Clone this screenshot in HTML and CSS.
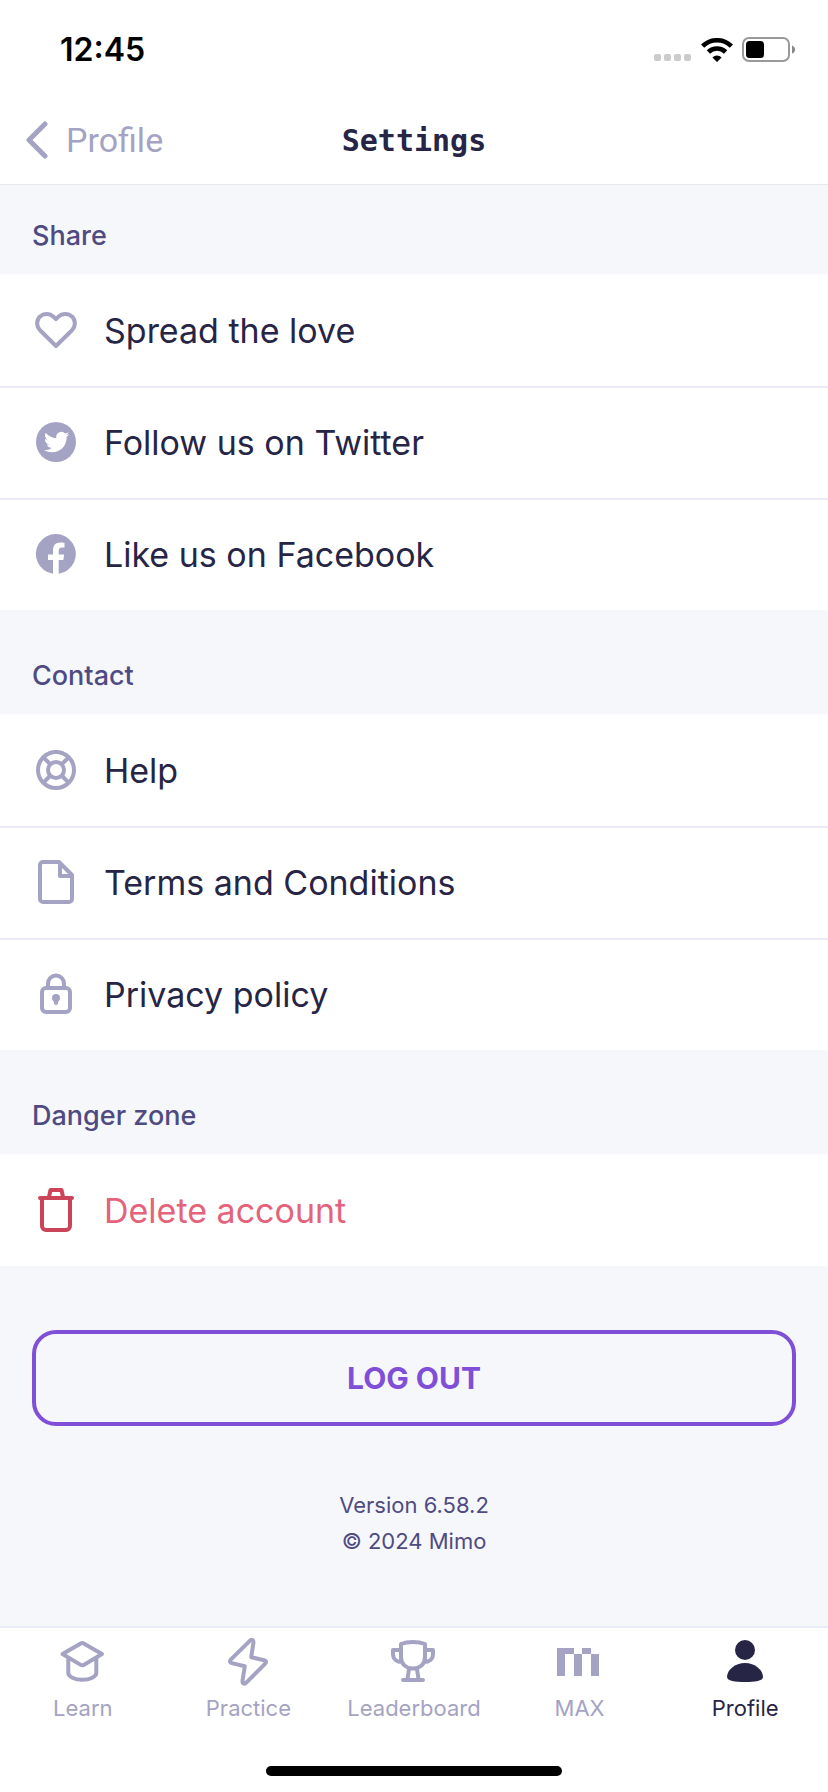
FILE: index.html
```html
<!DOCTYPE html>
<html lang="en">
<head>
<meta charset="utf-8">
<meta name="viewport" content="width=device-width, initial-scale=1">
<title>Settings</title>
<link rel="stylesheet" href="styles.css">
</head>
<body>
<div class="screen">
  <div class="status-bar">
    <time class="clock">12:45</time>
    <div class="status-icons">
      <svg class="signal" width="38" height="9" viewBox="0 0 38 9" aria-hidden="true"><g fill="#cbcbcb"><rect width="7" height="7" rx="2"/><rect x="10" width="7" height="7" rx="2"/><rect x="20" width="7" height="7" rx="2"/><rect x="30" width="7" height="7" rx="2"/></g></svg>
      <svg width="32" height="24" viewBox="0 0 32 24" aria-hidden="true"><g fill="none" stroke="#000" stroke-width="4.6"><path d="M1.6 8.2a20.4 20.4 0 0 1 28.8 0"/><path d="M7.4 14a12.2 12.2 0 0 1 17.2 0"/></g><path d="M16 24l-4.6-4.6a6.6 6.6 0 0 1 9.2 0z"/></svg>
      <svg width="54" height="26" viewBox="0 0 54 26" aria-hidden="true"><rect x="1" y="1" width="46" height="23" rx="6" fill="none" stroke="#999" stroke-width="2"/><rect x="4" y="4" width="18" height="17" rx="3.5"/><path d="M50 8.500q3 1 3 4t-3 4z" fill="#888"/></svg>
    </div>
  </div>
  <header class="nav-bar">
    <a class="back" href="#profile">
      <svg width="24" height="40" viewBox="0 0 24 40" aria-hidden="true"><path d="M21 4L5 20l16 16" fill="none" stroke="#a5a3c3" stroke-width="5" stroke-linecap="round" stroke-linejoin="round"/></svg>
      <span>Profile</span>
    </a>
    <h1 class="title">Settings</h1>
  </header>
  <main class="content">
    <section>
      <h2 class="section-title section-title-first">Share</h2>
      <ul class="list">
        <li><a class="row" href="#love"><svg class="icon" viewBox="0 0 48 48" aria-hidden="true"><path d="M24 40L7.800 24a9.700 9.700 0 0 1 0-13.300c3.800-3.700 9.900-3.700 13.700 0L24 13.200l2.500-2.500c3.800-3.700 9.900-3.700 13.700 0a9.700 9.700 0 0 1 0 13.300z"/></svg><span>Spread the love</span></a></li>
        <li><a class="row" href="#twitter"><svg class="icon" viewBox="0 0 48 48" aria-hidden="true"><circle class="solid" cx="24" cy="24" r="20"/><path class="cut" transform="translate(12 11.500) scale(1.050)" d="M23.950 4.570a10 10 0 0 1-2.820.770 4.960 4.960 0 0 0 2.160-2.720c-.95.550-2 .950-3.130 1.180a4.920 4.920 0 0 0-8.380 4.480C7.690 8.090 4.070 6.130 1.640 3.160a4.920 4.920 0 0 0 1.520 6.570 4.900 4.900 0 0 1-2.230-.610v.060a4.920 4.920 0 0 0 3.950 4.830 5 5 0 0 1-2.210.080 4.940 4.940 0 0 0 4.600 3.420A9.870 9.870 0 0 1 0 19.540a14 14 0 0 0 7.550 2.210c9.050 0 14-7.500 14-13.980 0-.210 0-.420-.020-.630a9.900 9.900 0 0 0 2.420-2.570z"/></svg><span>Follow us on Twitter</span></a></li>
        <li><a class="row" href="#facebook"><svg class="icon" viewBox="0 0 48 48" aria-hidden="true"><path class="solid" d="M21 43.800V30h-5v-5.500h5v-4.300c0-5 2.800-7.700 7.300-7.700 1.400 0 2.700.1 4.200.4v4.700h-2.400c-2.600 0-3.400 1.400-3.400 3.200v3.700h5.500L31.300 30h-4.600v13.800A20 20 0 1 0 21 43.800z"/></svg><span>Like us on Facebook</span></a></li>
      </ul>
    </section>
    <section>
      <h2 class="section-title">Contact</h2>
      <ul class="list">
        <li><a class="row" href="#help"><svg class="icon" viewBox="0 0 48 48" aria-hidden="true"><circle cx="24" cy="24" r="18"/><circle cx="24" cy="24" r="8"/><path d="M11.500 11.500l6.500 6.500M36.500 11.500L30 18M11.500 36.500L18 30M36.500 36.500L30 30"/></svg><span>Help</span></a></li>
        <li><a class="row" href="#terms"><svg class="icon" viewBox="0 0 48 48" aria-hidden="true"><path d="M27 4H11a3 3 0 0 0-3 3v34a3 3 0 0 0 3 3h26a3 3 0 0 0 3-3V17zM28 4v14h12"/></svg><span>Terms and Conditions</span></a></li>
        <li><a class="row" href="#privacy"><svg class="icon" viewBox="0 0 48 48" aria-hidden="true"><rect x="10" y="18" width="28" height="24" rx="4"/><path d="M16 18v-4.500a8 8 0 0 1 16 0V18"/><circle class="solid" cx="24" cy="28" r="4"/><path d="M24 29v4" stroke-linecap="round"/></svg><span>Privacy policy</span></a></li>
      </ul>
    </section>
    <section>
      <h2 class="section-title">Danger zone</h2>
      <ul class="list">
        <li><button type="button" class="row danger"><svg class="icon" viewBox="0 0 48 48" aria-hidden="true"><path d="M10 12v28a4 4 0 0 0 4 4h20a4 4 0 0 0 4-4V12M8 12h32M17 11l1.500-7h11l1.500 7" stroke-linecap="round"/></svg><span>Delete account</span></button></li>
      </ul>
    </section>
    <button type="button" class="logout">LOG OUT</button>
    <p class="version">Version 6.58.2<br>© 2024 Mimo</p>
  </main>
  <nav class="tabs" aria-label="Main">
    <a class="tab" href="#learn"><svg class="icon" viewBox="0 0 48 48" aria-hidden="true"><path d="M21.700 5.400L3.500 16l18.200 10.900a3 3 0 0 0 3 0L43 16 24.700 5.400a3 3 0 0 0-3 0zM9.300 20v15c0 3.500 6 6.800 14 6.800s14-3.300 14-6.800V20"/></svg><span>Learn</span></a>
    <a class="tab" href="#practice"><svg class="icon" viewBox="0 0 48 48" aria-hidden="true"><path d="M25.800 2.800L7 21.400c-1.800 1.800-1.200 3.200.8 3.700l13 3.200-2.300 14.500c-.4 2.800 1.600 3.800 3.500 2L41 25.800c1.800-1.800 1-3.200-.8-3.600l-13-3 2.200-14.500c.3-2.600-1.700-3.800-3.600-1.900z"/></svg><span>Practice</span></a>
    <a class="tab" href="#leaderboard"><svg class="icon" viewBox="0 0 48 48" aria-hidden="true"><path d="M11 6C17.500 3.400 28.500 3.400 35 6v13c0 7-5 11.500-12 11.500S11 26 11 19zM11 12H3v4c0 5 4 8 9 8M35 12h8v4c0 5-4 8-9 8M19 31l-1.500 10M27 31l1.500 10M13 42h20" stroke-linecap="round"/></svg><span>Leaderboard</span></a>
    <a class="tab" href="#max"><svg class="icon" viewBox="0 0 48 48" aria-hidden="true"><path class="solid" d="M1 10h17v6h-9v22H1zM18 16h8v22h-8zM26 10h9v6h-9zM35 16h8v22h-8z"/></svg><span>MAX</span></a>
    <a class="tab tab-active" href="#profile" aria-current="page"><svg class="icon" viewBox="0 0 48 48" aria-hidden="true"><circle class="solid" cx="24" cy="12" r="10"/><path class="solid" d="M24 25c10 0 18 7 18 14 0 4-8 5-18 5S6 43 6 39c0-7 8-14 18-14z"/></svg><span>Profile</span></a>
  </nav>
  <div class="home-area"><div class="home-indicator"></div></div>
</div>
</body>
</html>
```
FILE: styles.css
```css
* { box-sizing: border-box; }
body {
  margin: 0;
  background: #f5f7fb;
  color: #272546;
  font-family: Inter, "Liberation Sans", sans-serif;
}
a { color: inherit; text-decoration: none; }
button { font: inherit; cursor: pointer; }
.screen { display: flex; flex-direction: column; min-height: 100vh; }

.status-bar {
  display: flex;
  align-items: center;
  justify-content: space-between;
  height: 96px;
  padding: 4px 32px 0 60px;
  background: #fff;
}
.clock { color: #000; font-size: 32px; font-weight: 600; line-height: 40px; }
.status-icons { display: flex; align-items: center; gap: 9px; }
.signal { align-self: flex-end; }

.nav-bar {
  display: grid;
  grid-template-columns: 1fr auto 1fr;
  align-items: center;
  height: 89px;
  padding: 0 24px;
  border-bottom: 1px solid #e8e9ee;
  background: #fff;
}
.back {
  display: flex;
  align-items: center;
  gap: 18px;
  color: #a5a3c3;
  font-family: Roboto, sans-serif;
  font-size: 34px;
  line-height: 40px;
}
.title {
  margin: 0;
  padding-top: 2px;
  font-family: "DejaVu Sans Mono", monospace;
  font-size: 30px;
  font-weight: 700;
  line-height: 40px;
}

.content { flex: 1; }
.section-title {
  margin: 0;
  padding: 48px 32px 20px;
  color: #4f4b82;
  font-size: 27px;
  font-weight: 500;
  line-height: 36px;
}
.section-title-first { padding-top: 33px; }
.list { margin: 0; padding: 0; list-style: none; background: #fff; }
.list li + li { box-shadow: inset 0 2px #ebebf5; }
.row {
  display: flex;
  align-items: center;
  gap: 24px;
  width: 100%;
  height: 112px;
  padding: 0 32px;
  border: 0;
  background: none;
  font-size: 34px;
  line-height: 44px;
}
.row span { padding-top: 2px; }
.icon {
  flex: none;
  width: 48px;
  height: 48px;
  fill: none;
  stroke: #a5a3c3;
  stroke-width: 4;
  stroke-linejoin: round;
}
.icon .solid { fill: #a5a3c3; stroke: none; }
.icon .cut { fill: #fff; stroke: none; }
.danger { color: #e4637a; }
.danger .icon { stroke: #cb4459; }

.logout {
  display: block;
  width: calc(100% - 64px);
  height: 96px;
  margin: 64px 32px 0;
  border: 4px solid #804fd8;
  border-radius: 24px;
  background: transparent;
  color: #804fd8;
  font-size: 30px;
  font-weight: 700;
}
.version {
  margin: 61px 32px 0;
  color: #4f4b82;
  font-size: 22px;
  line-height: 36px;
  text-align: center;
}

.tabs {
  display: grid;
  grid-template-columns: repeat(5, 1fr);
  padding-top: 10px;
  border-top: 2px solid #ebebf5;
  background: #fff;
}
.tab {
  display: flex;
  flex-direction: column;
  align-items: center;
  gap: 6px;
  color: #a5a3c3;
  font-size: 22px;
  line-height: 32px;
}
.tab-active { color: #272546; }
.tab-active .icon .solid { fill: #272546; }
.home-area {
  display: flex;
  align-items: flex-end;
  justify-content: center;
  height: 68px;
  padding-bottom: 16px;
  background: #fff;
}
.home-indicator { width: 296px; height: 10px; border-radius: 5px; background: #000; }
```
